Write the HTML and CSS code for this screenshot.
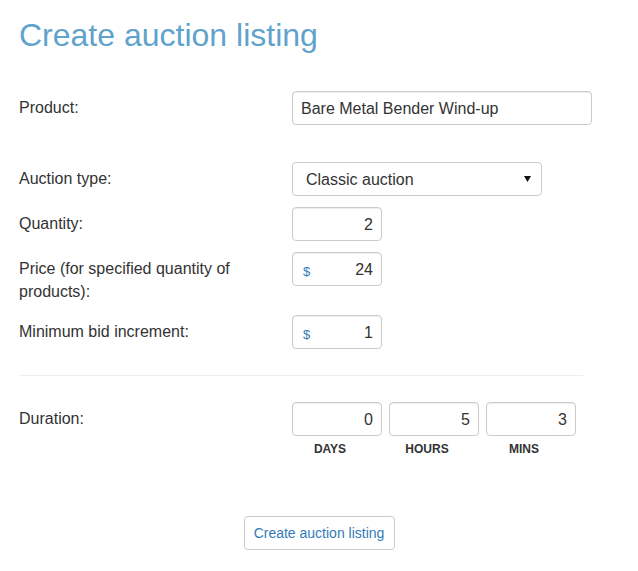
FILE: index.html
```html
<!DOCTYPE html>
<html>
<head>
<meta charset="utf-8">
<link rel="stylesheet" href="styles.css">
</head>
<body>
<div class="page">
  <h1 class="title">Create auction listing</h1>
  <form class="form">
    <div class="row row-product">
      <label class="label">Product:</label>
      <div class="control control-wide"><span class="val">Bare Metal Bender Wind-up</span></div>
    </div>
    <div class="row">
      <label class="label">Auction type:</label>
      <div class="control control-select">
        <span class="val">Classic auction</span>
        <svg class="caret" width="7" height="6" viewBox="0 0 7 6"><path d="M0 0H7L3.5 6Z" fill="#111"/></svg>
      </div>
    </div>
    <div class="row">
      <label class="label">Quantity:</label>
      <div class="control control-num"><span></span><span class="val">2</span></div>
    </div>
    <div class="row">
      <label class="label">Price (for specified quantity of<br>products):</label>
      <div class="control control-num"><span class="cur">$</span><span class="val">24</span></div>
    </div>
    <div class="row">
      <label class="label">Minimum bid increment:</label>
      <div class="control control-num"><span class="cur">$</span><span class="val">1</span></div>
    </div>
    <hr class="sep">
    <div class="row">
      <label class="label">Duration:</label>
      <div class="duration">
        <div class="unit">
          <div class="control control-num"><span></span><span class="val">0</span></div>
          <div class="unit-label">DAYS</div>
        </div>
        <div class="unit">
          <div class="control control-num"><span></span><span class="val">5</span></div>
          <div class="unit-label">HOURS</div>
        </div>
        <div class="unit">
          <div class="control control-num"><span></span><span class="val">3</span></div>
          <div class="unit-label">MINS</div>
        </div>
      </div>
    </div>
    <div class="actions">
      <button type="button" class="btn">Create auction listing</button>
    </div>
  </form>
</div>
</body>
</html>
```

FILE: styles.css
```css
html, body {
  margin: 0;
  padding: 0;
  background: #fff;
}
body {
  font-family: "Liberation Sans", Arial, sans-serif;
  font-size: 16px;
  line-height: 23px;
  color: #333;
}
.page {
  padding: 18px 19px 0 19px;
}
.title {
  margin: 0;
  font-size: 32px;
  line-height: 35px;
  font-weight: normal;
  color: #5fa3cc;
}
.form {
  margin-top: 38px;
}
.row {
  display: flex;
  align-items: flex-start;
  margin-bottom: 11px;
}
.row-product {
  margin-bottom: 37px;
}
.label {
  width: 273px;
  flex: none;
  padding-top: 5px;
  padding-bottom: 1px;
}
.control {
  box-sizing: border-box;
  height: 34px;
  border: 1px solid #ccc;
  border-radius: 4px;
  background: #fff;
  box-shadow: inset 0 1px 1px rgba(0,0,0,0.075);
  display: flex;
  align-items: center;
  color: #333;
}
.control-wide {
  width: 300px;
  padding-left: 8px;
}
.control-select {
  width: 250px;
  padding: 0 10px 0 13px;
  justify-content: space-between;
  box-shadow: none;
}
.caret {
  display: block;
}
.control-num {
  width: 90px;
  padding: 0 8px 0 10px;
  justify-content: space-between;
}
.cur {
  font-size: 13px;
  color: #337ab7;
  padding-top: 4px;
}
.sep {
  width: 564px;
  margin: 26px 0 26px 0;
  border: 0;
  border-top: 1px solid #eee;
  height: 0;
}
.duration {
  display: flex;
  gap: 7px;
}
.unit {
  display: flex;
  flex-direction: column;
}
.unit-label {
  margin-top: 5px;
  padding-right: 14px;
  text-align: center;
  font-size: 12px;
  line-height: 17px;
  font-weight: bold;
  color: #333;
}
.actions {
  display: flex;
  justify-content: center;
  margin-top: 58px;
}
.btn {
  width: 151px;
  height: 34px;
  box-sizing: border-box;
  border: 1px solid #ccc;
  border-radius: 4px;
  background: #fff;
  color: #337ab7;
  font-family: "Liberation Sans", Arial, sans-serif;
  font-size: 14px;
  padding: 0;
}
```
